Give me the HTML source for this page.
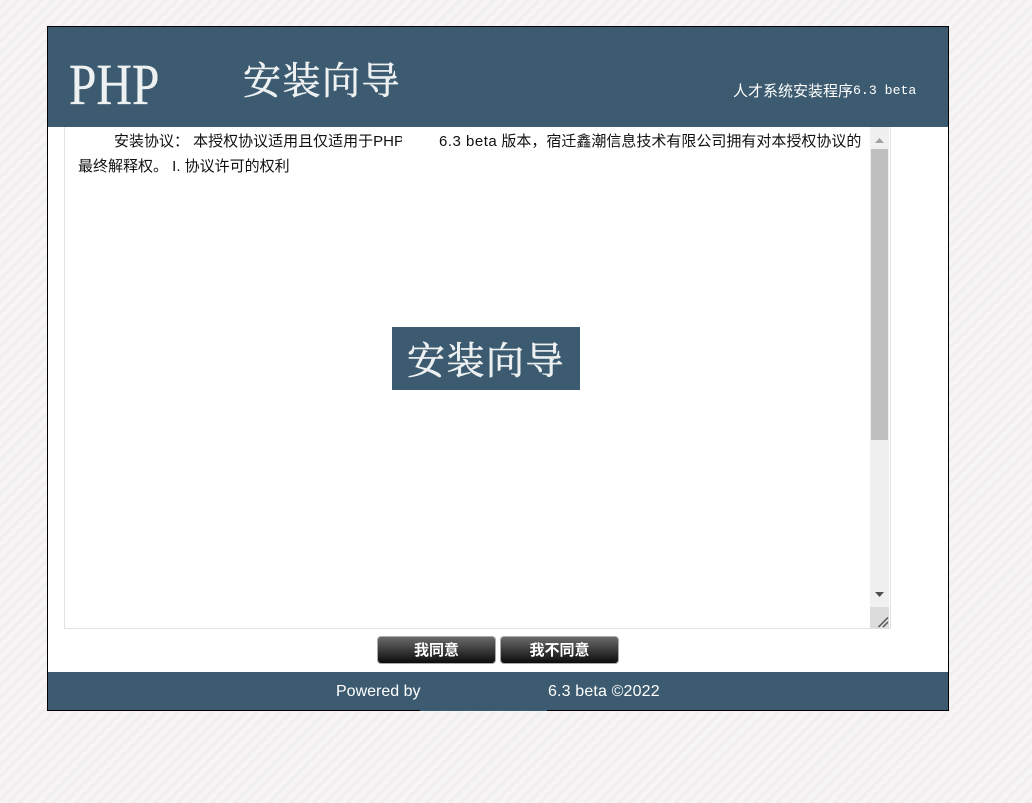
<!DOCTYPE html>
<html lang="zh">
<head>
<meta charset="utf-8">
<title>安装向导</title>
<style>
html,body{margin:0;padding:0;width:1032px;height:803px;overflow:hidden}
body{position:relative;background-color:#f4f2f3;background-image:repeating-linear-gradient(135deg,#f6f5f5 0,#f6f4f5 3px,#f0edee 5px,#f1eeef 6px,#f6f5f5 8px);font-family:"Liberation Sans","Noto Sans CJK SC",sans-serif}
.a{position:absolute;white-space:nowrap}
#wrap{left:47px;top:26px;width:900px;height:683px;background:#fff;border:1px solid #000}
#head{left:48px;top:27px;width:900px;height:100px;background:#3c5b70}
#foot{left:48px;top:672px;width:900px;height:38px;background:#3c5b70}
#gap{left:420px;top:710px;width:127px;height:1px;background:#3c5b70}
.serif{font-family:"Liberation Serif","Noto Serif CJK SC",serif;color:#eef1f2}
.cn{-webkit-text-stroke:.5px #eef1f2}
#box{left:64px;top:127px;width:825px;height:501px;background:#fff;border:1px solid #e2e2e2;border-top:0}
#sb{left:870px;top:127px;width:19px;height:480px;background:#f0f0f0}
#th{left:871px;top:149px;width:17px;height:291px;background:#bfbfbf}
#corner{left:870px;top:607px;width:19px;height:21px;background:#dcdcdc}
.t{font-size:15px;line-height:25px;color:#111}
.btn{top:636px;height:28px;box-sizing:border-box;border:1px solid #aaa;border-radius:4px;background:linear-gradient(#6a6a6a,#0c0c0c);color:#fff;font-weight:bold;font-size:15px;line-height:27px;text-align:center}
.f{font-size:16px;line-height:20px;color:#fff}
</style>
</head>
<body>
<div class="a" id="wrap"></div>
<div class="a" id="head"></div>
<div class="a serif" style="left:69px;top:55px;font-size:58px;line-height:60px;transform:scaleX(.85);transform-origin:0 0;-webkit-text-stroke:.3px #eef1f2">PHP</div>
<div class="a serif cn" style="left:243px;top:58px;font-size:38px;line-height:48px;letter-spacing:1.500px">安装向导</div>
<div class="a" style="left:733px;top:81px;font-size:15px;line-height:20px;color:#fff;font-family:'Noto Sans CJK SC',sans-serif;font-weight:400">人才系统安装程序<span style="position:absolute;left:120px;top:0;font-family:'Liberation Mono',monospace;font-size:13.200px;font-weight:400">6.3 beta</span></div>

<div class="a" id="box"></div>
<div class="a t" style="left:114px;top:129px;width:288px;overflow:hidden">安装协议： 本授权协议适用且仅适用于PHP</div>
<div class="a t" style="left:439px;top:129px"><span style="letter-spacing:.5px">6.3 beta</span> 版本，宿迁鑫潮信息技术有限公司拥有对本授权协议的</div>
<div class="a t" style="left:78px;top:154px">最终解释权。 I. 协议许可的权利</div>

<div class="a" id="sb"></div>
<div class="a" id="th"></div>
<svg class="a" style="left:870px;top:127px" width="19" height="22"><path d="M5 16h9l-4.500-5z" fill="#a3a3a3"/></svg>
<svg class="a" style="left:870px;top:585px" width="19" height="22"><path d="M5 7h9l-4.500 5z" fill="#505050"/></svg>
<div class="a" id="corner"></div>
<svg class="a" style="left:870px;top:607px" width="19" height="21"><path d="M8.500 20L18 10.500M13 20l5-5" stroke="#555" stroke-width="1.500" fill="none"/></svg>

<div class="a" style="left:392px;top:327px;width:188px;height:63px;background:#3c5b70"></div>
<div class="a serif cn" style="left:407px;top:338px;font-size:38px;line-height:48px;letter-spacing:1.500px">安装向导</div>

<div class="a btn" style="left:377px;width:119px">我同意</div>
<div class="a btn" style="left:500px;width:119px">我不同意</div>

<div class="a" id="foot"></div>
<div class="a" id="gap"></div>
<div class="a f" style="left:336px;top:682px">Powered by</div>
<div class="a f" style="left:548px;top:682px;letter-spacing:.15px">6.3 beta ©2022</div>
</body>
</html>
